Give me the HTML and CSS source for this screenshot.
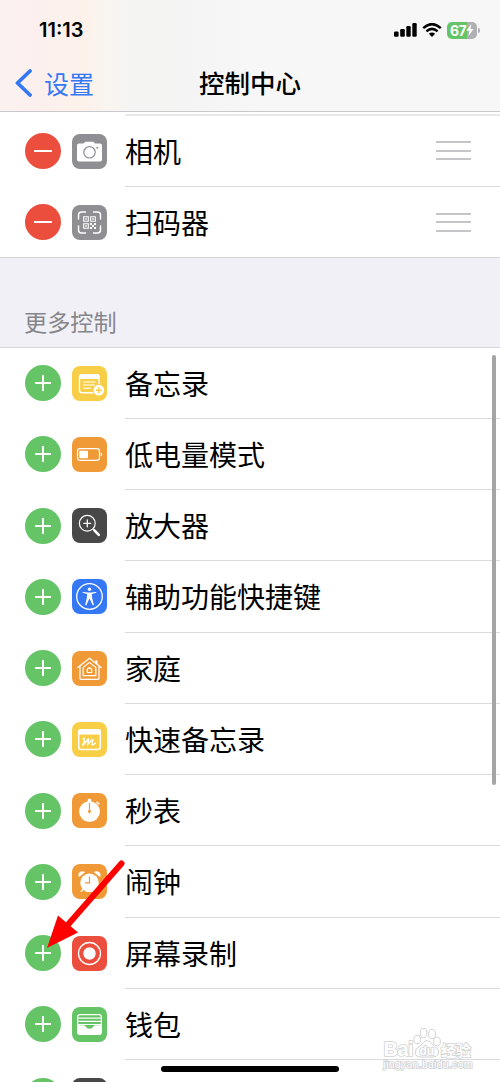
FILE: index.html
```html
<!DOCTYPE html>
<html lang="zh-CN">
<head>
   <meta charset="UTF-8">
   <meta name="viewport" content="width=device-width, initial-scale=1.0">
   <title>控制中心</title>
   <link rel="stylesheet" href="styles.css">
</head>
<body>
   <div class="phone">
      <header>
         <div class="status">
            <span class="time">11:13</span>
            <div class="status-icons">
               <svg width="24" height="14" viewBox="0 0 24 14">
                  <rect x="0" y="8.5" width="4.6" height="5.3" rx="1.2"/>
                  <rect x="6.2" y="6" width="4.6" height="7.8" rx="1.2"/>
                  <rect x="12.3" y="3" width="4.4" height="10.8" rx="1.2"/>
                  <rect x="18.3" y="0" width="4.4" height="13.8" rx="1.2"/>
               </svg>
               <svg class="wifi" width="20" height="14" viewBox="0 0 20 14">
                  <path d="M1.2 5.1Q10-2.9 18.8 5.1M4.4 8.4Q10 3.4 15.6 8.4" fill="none" stroke="#000" stroke-width="2.5"/>
                  <path d="M6.9 10.8Q10 8.3 13.1 10.8L10 14z"/>
               </svg>
               <div class="battery">
                  <span>67</span>
                  <svg width="8" height="12" viewBox="0 0 8 12"><path d="M5.2 0L.4 6.8h3L2.5 12l5-7H4.6z" fill="#fff"/></svg>
               </div>
               <i class="battery-tip"></i>
            </div>
         </div>
         <nav>
            <a class="back">
               <svg width="17" height="28" viewBox="0 0 17 28"><path d="M15 2L2.5 14 15 26" fill="none" stroke="#3478f6" stroke-width="3.8" stroke-linecap="round" stroke-linejoin="round"/></svg>
               设置
            </a>
            <h1>控制中心</h1>
         </nav>
      </header>

      <ul class="list included">
         <li>
            <span class="toggle remove"></span>
            <svg class="icon gray" viewBox="0 0 35 35">
               <path d="M7 9.500h4.500l1.800-1.700h8l1.900 1.700H28q2 0 2 2v14q0 2-2 2H7q-2 0-2-2v-14q0-2 2-2z" fill="#fff"/>
               <circle cx="17.500" cy="18.300" r="5.700" fill="none" stroke="#8e8e93" stroke-width="1.200"/>
               <circle cx="25.300" cy="13.800" r="1" fill="#8e8e93"/>
            </svg>
            <div class="label">相机<span class="grip"></span></div>
         </li>
         <li>
            <span class="toggle remove"></span>
            <svg class="icon gray" viewBox="0 0 35 35">
               <path d="M6.500 14v-4q0-3 3-3h4M21.500 7h4q3 0 3 3v4M28.500 21v4q0 3-3 3h-4M13.500 28h-4q-3 0-3-3v-4" fill="none" stroke="#fff" stroke-width="1.500" stroke-linecap="round"/>
               <path d="M11.700 11.700h4.600v4.600h-4.600zM18.700 11.700h4.600v4.600h-4.600zM11.700 18.700h4.600v4.600h-4.600z" fill="none" stroke="#fff" stroke-width="1.100"/>
               <path d="M13.300 13.300h1.500v1.500h-1.500zM20.300 13.300h1.500v1.500h-1.500zM13.300 20.300h1.500v1.500h-1.500zM18 18h2v2h-2zM22 18h2v2h-2zM20 20h2v2h-2zM18 22h2v2h-2zM22 22h2v2h-2z" fill="#fff"/>
            </svg>
            <div class="label">扫码器<span class="grip"></span></div>
         </li>
      </ul>

      <h2>更多控制</h2>

      <ul class="list">
         <li>
            <span class="toggle add"></span>
            <svg class="icon yellow" viewBox="0 0 35 35">
               <rect x="7.500" y="8.700" width="19.500" height="18" rx="2.500" fill="none" stroke="#fff" stroke-width="1.400"/>
               <path d="M7 13V10.500q0-2.500 2.500-2.500H25q2.500 0 2.500 2.500V13z" fill="#fff"/>
               <path d="M11 16h12.500M11 19h12M11 22.200h8" stroke="#fff" stroke-width="1"/>
               <circle cx="26.800" cy="24.200" r="5.800" fill="#fff" stroke="#f8ce46" stroke-width="1"/>
               <path d="M23.800 24.200h6M26.800 21.200v6" stroke="#f8ce46" stroke-width="1.400"/>
            </svg>
            <div class="label">备忘录</div>
         </li>
         <li>
            <span class="toggle add"></span>
            <svg class="icon orange" viewBox="0 0 35 35">
               <rect x="5.500" y="11.700" width="22" height="11.600" rx="2.500" fill="none" stroke="#fff" stroke-width="1.200"/>
               <rect x="7.200" y="13.700" width="8.800" height="7.600" rx="1" fill="#fff"/>
               <path d="M28.800 15.500q1.400.3 1.400 2t-1.400 2z" fill="#fff"/>
            </svg>
            <div class="label">低电量模式</div>
         </li>
         <li>
            <span class="toggle add"></span>
            <svg class="icon dark" viewBox="0 0 35 35">
               <circle cx="15.300" cy="15.300" r="7.900" fill="none" stroke="#fff" stroke-width="1.200"/>
               <path d="M11.800 15.300h7M15.300 11.800v7" stroke="#fff" stroke-width="1.300" stroke-linecap="round"/>
               <path d="M21 21l2 2" stroke="#fff" stroke-width="1.400"/>
               <path d="M22.500 22.500l4.300 4.300" stroke="#fff" stroke-width="2.600" stroke-linecap="round"/>
            </svg>
            <div class="label">放大器</div>
         </li>
         <li>
            <span class="toggle add"></span>
            <svg class="icon blue" viewBox="0 0 35 35">
               <circle cx="17.500" cy="17.500" r="12.800" fill="none" stroke="#fff" stroke-width="1.300"/>
               <circle cx="17.500" cy="10.300" r="1.700" fill="#fff"/>
               <path d="M11.300 12.900l4.500.6h3.400l4.500-.6q1 .1.700.8l-4.500 1.300.3 4.500 1.600 6q0 1.200-1.100.7L17.800 20h-.6l-2.900 6.200q-1.100.5-1.100-.7l1.600-6 .3-4.500-4.500-1.300q-.3-.7.7-.8z" fill="#fff"/>
            </svg>
            <div class="label">辅助功能快捷键</div>
         </li>
         <li>
            <span class="toggle add"></span>
            <svg class="icon orange" viewBox="0 0 35 35">
               <g fill="none" stroke="#fff" stroke-width="1.200" stroke-linejoin="round" stroke-linecap="round">
                  <path d="M5.800 16.500L17.500 7.200l11.700 9.300M8 15.200v12.100q0 1 1 1h17q1 0 1-1V15.200"/>
                  <path d="M11.200 24.700v-8.300l6.300-5 6.300 5v8.300z"/>
                  <path d="M15.300 21.500v-3.300l2.200-1.700 2.200 1.700v3.300z"/>
               </g>
               <path d="M23.200 9.500h2.300v4.300l-2.300-1.800z" fill="#fff"/>
            </svg>
            <div class="label">家庭</div>
         </li>
         <li>
            <span class="toggle add"></span>
            <svg class="icon yellow" viewBox="0 0 35 35">
               <rect x="6.700" y="7.700" width="21.600" height="19.800" rx="2.500" fill="none" stroke="#fff" stroke-width="1.500"/>
               <path d="M6 12.500V9.500Q6 7 8.500 7h18Q29 7 29 9.500v3z" fill="#fff"/>
               <path d="M11.200 16.500q1.500-.8 1.100 1.500l-1.500 5.500 5-6q1.200-1.200.8.600l-1.100 4.700 4.300-4.900q1.500-1 1 .8l-.8 2.700q-.4 2 1.200 1.300l2.300-1.600" fill="none" stroke="#fff" stroke-width="1.400" stroke-linecap="round" stroke-linejoin="round"/>
            </svg>
            <div class="label">快速备忘录</div>
         </li>
         <li>
            <span class="toggle add"></span>
            <svg class="icon orange" viewBox="0 0 35 35">
               <circle cx="17.500" cy="18.600" r="10.400" fill="#fff"/>
               <path d="M15.700 7q0-1.200 1.800-1.200T19.300 7v2h-3.600zM25 8.200l2.800 2.300-1 1.200-2.800-2.300z" fill="#fff"/>
               <path d="M17.500 10v8.500" stroke="#f09a37" stroke-width="1.200"/>
               <path d="M17.500 16l1.700 2.400-1.700 2.400-1.700-2.400z" fill="#f09a37"/>
            </svg>
            <div class="label">秒表</div>
         </li>
         <li>
            <span class="toggle add"></span>
            <svg class="icon orange" viewBox="0 0 35 35">
               <circle cx="17.500" cy="18.800" r="9.300" fill="#fff"/>
               <path d="M7.100 13q-1.700-2.700.6-4.700t5.500-.4zM27.900 13q1.700-2.700-.6-4.700t-5.500-.4z" fill="#fff"/>
               <path d="M11.500 25l-2.200 2.300M23.500 25l2.200 2.300" stroke="#fff" stroke-width="1.400" stroke-linecap="round"/>
               <path d="M17.500 12.500v6.300H13" fill="none" stroke="#f09a37" stroke-width="1.200"/>
            </svg>
            <div class="label">闹钟</div>
         </li>
         <li>
            <span class="toggle add"></span>
            <svg class="icon red" viewBox="0 0 35 35">
               <circle cx="17.500" cy="17.500" r="11" fill="none" stroke="#fff" stroke-width="1.300"/>
               <circle cx="17.500" cy="17.500" r="6.200" fill="#fff"/>
            </svg>
            <div class="label">屏幕录制</div>
         </li>
         <li>
            <span class="toggle add"></span>
            <svg class="icon green" viewBox="0 0 35 35">
               <rect x="5" y="7" width="25" height="21" rx="3" fill="#fff"/>
               <path d="M6.200 10q0-1.700 1.800-1.700h19q1.800 0 1.800 1.700v.4H6.200zM6.200 11.700h22.600v2H6.200zM6.200 14.900h22.600v2H6.200z" fill="#65c466"/>
               <path d="M6.200 18h22.600l-.2.300h-5.100q-1.200 0-2 1.200-1.500 2.200-4 2.200t-4-2.200q-.8-1.200-2-1.200H6.200z" fill="#65c466"/>
            </svg>
            <div class="label">钱包</div>
         </li>
         <li>
            <span class="toggle add"></span>
            <svg class="icon dark" viewBox="0 0 35 35"></svg>
            <div class="label"></div>
         </li>
      </ul>

      <i class="scrollbar"></i>
      <i class="home-bar"></i>

      <svg class="arrow" width="90" height="96" viewBox="0 0 90 96">
         <path d="M81.500 8.500L25 73" stroke="#f00" stroke-width="6" stroke-linecap="round"/>
         <path d="M7 93L18 60.500 38 77.500z" fill="#f00"/>
      </svg>

      <svg class="watermark" width="94" height="48" viewBox="0 0 94 48">
         <g fill="#fff" stroke="#d2d2d2" stroke-width="1.600">
            <text class="mark" x="2.500" y="30" textLength="30">Bai</text>
            <g stroke-width="1">
               <ellipse cx="36.300" cy="13.500" rx="3.400" ry="4.300"/>
               <ellipse cx="42.500" cy="7" rx="3.300" ry="4.700"/>
               <ellipse cx="51" cy="8" rx="3.400" ry="4.700"/>
               <ellipse cx="56" cy="15.500" rx="3.400" ry="4.300"/>
               <path d="M46 14.500q3 0 6 4.500 6 4 5.500 8-.6 4-6 4H40q-5.400 0-5.800-4-.4-4 5.800-8 3-4.500 6-4.500z"/>
            </g>
            <text class="du" x="38.500" y="28.500">du</text>
            <text class="jingyan" x="60" y="29.500">经验</text>
            <text class="url" x="2.500" y="42" textLength="89">jingyan.baidu.com</text>
         </g>
      </svg>
   </div>
</body>
</html>
```
FILE: styles.css
```css
* {
   margin: 0;
   padding: 0;
   box-sizing: border-box;
}

body {
   background-color: #fff;
   font-family: "Noto Sans CJK SC", sans-serif;
   color: #000;
   overflow: hidden;
}

.phone {
   position: relative;
   width: 500px;
   height: 1082px;
   overflow: hidden;
}

/* Barra superior */
header {
   height: 112px;
   border-bottom: 1px solid #c9c9cb;
   background: linear-gradient(90deg, #faf1f1 0, #fcf0ed 45px, #fdf2ea 85px, #f9f5f0 108px, #f4f4f3 135px, #f4f4f4 190px, #f7f7f7 260px);
}

.status {
   display: flex;
   justify-content: space-between;
   align-items: center;
   height: 60px;
   padding: 0 20px 0 39px;
}

.time {
   font-family: Inter, sans-serif;
   font-size: 20px;
   font-weight: 600;
}

.status-icons {
   display: flex;
   align-items: center;
}

.wifi {
   margin: 0 5px 0 4px;
}

.battery {
   display: flex;
   align-items: center;
   width: 30px;
   height: 17px;
   padding-left: 3px;
   border-radius: 5px;
   background: linear-gradient(90deg, #65c466 67%, #b0b0b2 67%);
   font-family: Inter, sans-serif;
   font-size: 14px;
   font-weight: 700;
   color: #fff;
}

.battery span {
   letter-spacing: -0.500px;
}

.battery-tip {
   width: 2px;
   height: 5px;
   margin-left: 1px;
   border-radius: 0 2px 2px 0;
   background-color: #b0b0b2;
}

nav {
   display: grid;
   grid-template-columns: 1fr auto 1fr;
   align-items: center;
   height: 45px;
   padding: 0 15px;
}

.back {
   display: flex;
   align-items: center;
   gap: 12px;
   font-size: 25px;
   line-height: 34px;
   color: #3478f6;
}

h1 {
   padding-bottom: 2px;
   font-size: 25.500px;
   font-weight: 500;
   line-height: 34px;
}

/* Listas */
.list {
   list-style: none;
}

.included {
   height: 146px;
   padding-top: 3.500px;
   border-bottom: 1px solid #d5d5d9;
   background: linear-gradient(#e9e9eb, #e9e9eb) 125px 2px / 100% 2px no-repeat;
}

.list li {
   display: flex;
   align-items: center;
   height: 71.250px;
   padding-left: 25px;
}

.toggle {
   flex: none;
   width: 36px;
   height: 36px;
   margin-right: 11px;
   border-radius: 50%;
}

.remove {
   background: linear-gradient(#fff, #fff) center / 18px 2px no-repeat #eb4e3d;
}

.add {
   background: linear-gradient(#fff, #fff) center / 16px 2px no-repeat,
      linear-gradient(#fff, #fff) center / 2px 16px no-repeat #65c466;
}

.icon {
   flex: none;
   width: 35px;
   height: 35px;
   margin-right: 18px;
   border-radius: 8px;
}

.gray { background-color: #8e8e93; }
.yellow { background-color: #f8ce46; }
.orange { background-color: #f09a37; }
.dark { background-color: #484848; }
.blue { background-color: #3478f6; }
.red { background-color: #eb4e3d; }
.green { background-color: #65c466; }

.label {
   display: flex;
   flex: 1;
   justify-content: space-between;
   align-items: center;
   height: 100%;
   padding-right: 29px;
   border-bottom: 1px solid #dadadc;
   font-size: 28px;
}

.included li:last-child .label {
   border-bottom: none;
}

.grip {
   width: 35px;
   height: 19px;
   border-top: 2px solid #c5c5c7;
   border-bottom: 2px solid #c5c5c7;
   background: linear-gradient(#c5c5c7, #c5c5c7) center / 100% 2px no-repeat;
}

h2 {
   height: 89.500px;
   padding: 46px 24px 0;
   border-bottom: 1px solid #d5d5d9;
   background-color: #f1f0f6;
   font-size: 23.200px;
   font-weight: 400;
   line-height: 35px;
   color: #86868a;
}

/* Elementos sobre a lista */
.scrollbar {
   position: absolute;
   top: 355px;
   left: 492px;
   width: 4px;
   height: 430px;
   border-radius: 2px;
   background-color: #a5a5a5;
}

.home-bar {
   position: absolute;
   top: 1066px;
   left: 161px;
   width: 178px;
   height: 6px;
   border-radius: 3px;
   background-color: #000;
}

.arrow {
   position: absolute;
   top: 855px;
   left: 40px;
}

.watermark {
   position: absolute;
   top: 1026px;
   left: 381px;
}

.watermark text {
   paint-order: stroke;
}

.mark {
   font: bold 20px "Liberation Sans", sans-serif;
}

.du {
   font: bold 12px "Liberation Sans", sans-serif;
}

.jingyan {
   font: bold 15px "Noto Sans CJK SC", sans-serif;
}

.url {
   font: 10.500px "Liberation Sans", sans-serif;
}
```
